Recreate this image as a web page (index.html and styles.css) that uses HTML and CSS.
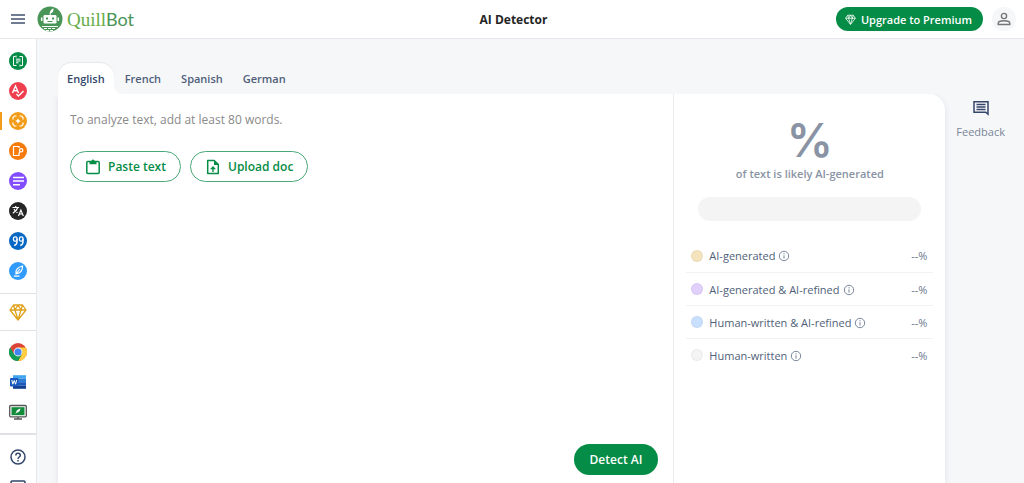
FILE: index.html
```html
<!DOCTYPE html>
<html lang="en">
<head>
<meta charset="utf-8">
<meta name="viewport" content="width=device-width, initial-scale=1">
<title>AI Detector</title>
<link rel="stylesheet" href="styles.css">
</head>
<body>
<svg class="defs" aria-hidden="true">
  <symbol id="gem" viewBox="0 0 18 18"><path d="M4.500 2h9L17 7l-8 10L1 7zM1 7h16M4.500 2 6 7l3 10 3-10 1.500-5M6 7l3-5 3 5" fill="none" stroke="currentColor" stroke-width="1.300" stroke-linejoin="round"/></symbol>
  <symbol id="info" viewBox="0 0 12 12"><circle cx="6" cy="6" r="4.700" fill="none" stroke="currentColor"/><path d="M6 5.300v3.400M6 3.200v1.200" stroke="currentColor"/></symbol>
</svg>
<header class="header">
  <div class="brand">
    <button class="plain" aria-label="Menu"><svg width="14" height="10" viewBox="0 0 14 10"><path d="M0 1h14M0 5h14M0 9h14" stroke="#42526e" stroke-width="1.500"/></svg></button>
    <a class="logo" href="#" aria-label="QuillBot">
      <svg width="26" height="26" viewBox="0 0 26 26">
        <circle cx="13" cy="13" r="12.500" fill="#499557"/>
        <path d="M13 9.500C12 6 14 3 16.500 2.500c.3 2.500-.8 4.500-2.800 5V9.500" fill="#fff"/>
        <rect x="6.500" y="9" width="13" height="8.500" rx="1.200" fill="#fff"/>
        <path d="M4.700 11.500v3.500M21.300 11.500v3.500" stroke="#fff" stroke-width="1.500"/>
        <rect x="9" y="11.500" width="2" height="2" fill="#499557"/><rect x="15" y="11.500" width="2" height="2" fill="#499557"/>
        <path d="M10.500 15.500h5" stroke="#499557"/>
        <path d="M5 20.500h16" stroke="#fff"/>
        <path d="M7 22.500h12M9 24.500h8" stroke="#fff" stroke-width="1.200" stroke-dasharray="3 1"/>
      </svg>
      <span class="wordmark"><span class="quill">Quill</span><span class="bot">Bot</span></span>
    </a>
  </div>
  <h1 class="title">AI Detector</h1>
  <div class="account">
    <button class="premium"><svg width="11" height="11"><use href="#gem"/></svg>Upgrade to Premium</button>
    <button class="avatar" aria-label="Account"><svg width="14" height="14" viewBox="0 0 14 14" fill="none" stroke="#757575" stroke-width="1.400"><circle cx="7" cy="4" r="2.600"/><path d="M1.200 12.500v-1.300c0-1.600 3-2.500 5.800-2.500s5.800.9 5.800 2.500v1.300z"/></svg></button>
  </div>
</header>
<div class="body">
  <nav class="sidebar" aria-label="Tools">
    <div class="group">
      <a class="tool" href="#" aria-label="Paraphraser"><svg width="18" height="18" viewBox="0 0 18 18"><circle cx="9" cy="9" r="9" fill="#058c46"/><path d="M6.500 4.500h-2v9h3M11.500 13.500h2v-9h-3M7 3.500v2M11 12.500v2M7 7.200h4.500M7 9h4.500M7 10.800h2.500" fill="none" stroke="#fff"/></svg></a>
      <a class="tool" href="#" aria-label="Grammar Checker"><svg width="18" height="18" viewBox="0 0 18 18"><circle cx="9" cy="9" r="9" fill="#ef3f4f"/><path d="m3.500 11 3-7 3 7M4.500 8.800h4M7.500 12l2 2 5-5" fill="none" stroke="#fff" stroke-width="1.400"/></svg></a>
      <a class="tool active" href="#" aria-label="AI Detector"><svg width="18" height="18" viewBox="0 0 18 18"><circle cx="9" cy="9" r="9" fill="#f39c19"/><path d="M4 7.500V5.500L5.500 4h2M10.500 4h2L14 5.500v2M14 10.500v2L12.500 14h-2M7.500 14h-2L4 12.500v-2" fill="none" stroke="#fff" stroke-width="1.200"/><path d="M9 6.200 9.900 8.100 11.800 9l-1.900.9L9 11.800l-.9-1.900L6.200 9l1.900-.9z" fill="#fff"/></svg></a>
      <a class="tool" href="#" aria-label="AI Humanizer"><svg width="18" height="18" viewBox="0 0 18 18"><circle cx="9" cy="9" r="9" fill="#f77b0b"/><path d="M10 6V4.500H4.500v9H10V11.500l1.200-2" fill="none" stroke="#fff" stroke-width="1.200"/><circle cx="12.200" cy="8.300" r="1.700" fill="none" stroke="#fff" stroke-width="1.200"/></svg></a>
      <a class="tool" href="#" aria-label="Summarizer"><svg width="18" height="18" viewBox="0 0 18 18"><circle cx="9" cy="9" r="9" fill="#824dff"/><path d="M4 5.500h11M4 9h11M4 12.700h7" stroke="#fff" stroke-width="1.500"/></svg></a>
      <a class="tool" href="#" aria-label="Translator"><svg width="18" height="18" viewBox="0 0 18 18"><circle cx="9" cy="9" r="9" fill="#252525"/><path d="M3.500 5.500h6.500M6.700 4v1.500M8.800 5.500C8 8 6 10 3.800 11.200M5 7c.8 1.700 2 2.800 3.500 3.800M9.500 14l2.400-6 2.400 6M10.300 12h3.200" fill="none" stroke="#fff" stroke-width="1.200"/></svg></a>
      <a class="tool" href="#" aria-label="Citation Generator"><svg width="18" height="18" viewBox="0 0 18 18"><circle cx="9" cy="9" r="9" fill="#0868c4"/><path d="M8 6.800v3C8 12 7 13 5.200 13.500M14 6.800v3c0 2.200-1 3.200-2.800 3.700" fill="none" stroke="#fff" stroke-width="1.400"/><rect x="4.500" y="4.800" width="3.500" height="4.400" rx="1.500" fill="none" stroke="#fff" stroke-width="1.300"/><rect x="10.500" y="4.800" width="3.500" height="4.400" rx="1.500" fill="none" stroke="#fff" stroke-width="1.300"/></svg></a>
      <a class="tool" href="#" aria-label="QuillBot Flow"><svg width="18" height="18" viewBox="0 0 18 18"><circle cx="9" cy="9" r="9" fill="#309bfa"/><path d="M7 12c-1-4 2-7 6.500-8 .2 4-1.500 7-6.500 8zm0 0 4-5M4.800 14.200h5.700" fill="none" stroke="#fff" stroke-width="1.200"/></svg></a>
    </div>
    <div class="group">
      <a class="tool gold" href="#" aria-label="Premium"><svg width="18" height="18"><use href="#gem"/></svg></a>
    </div>
    <div class="group apps">
      <a class="tool" href="#" aria-label="QuillBot for Chrome"><svg width="18" height="18" viewBox="0 0 18 18"><circle cx="9" cy="9" r="9" fill="#db4437"/><path d="M9 4.500h7.800A9 9 0 0 1 9 18l3.900-6.800z" fill="#ffcd40"/><path d="M12.900 11.200 9 18A9 9 0 0 1 1.200 4.500l3.900 6.700z" fill="#0f9d58"/><circle cx="9" cy="9" r="4.400" fill="#f5f5f5"/><circle cx="9" cy="9" r="3.500" fill="#4285f4"/></svg></a>
      <a class="tool" href="#" aria-label="QuillBot for Word"><svg width="18" height="18" viewBox="0 0 18 18"><path d="M4 2.200h13v3.500H4z" fill="#41a5ee"/><path d="M4 5.700h13v3.500H4z" fill="#2b7cd3"/><path d="M4 9.200h13v3.300H4z" fill="#185abd"/><path d="M4 12.500h13v3.300H4z" fill="#103f91"/><rect x="1" y="5" width="8.500" height="8.500" rx=".8" fill="#185abd"/><path d="m2.800 7 1 4.200L5.200 7.500l1.400 3.700 1-4.200" fill="none" stroke="#fff"/></svg></a>
      <a class="tool" href="#" aria-label="QuillBot for desktop"><svg width="18" height="18" viewBox="0 0 18 18"><rect x=".7" y="2.500" width="16.600" height="11.300" rx="1" fill="#fff" stroke="#555" stroke-width="1.300"/><rect x="2.500" y="4.200" width="13" height="8" fill="#128b3a"/><path d="M6.500 11c.5-3 2-5 5-5.500-.2 2.200-1.500 4-4 4.200z" fill="#fff"/><path d="M9 14v2M5 16h8" stroke="#555" stroke-width="1.400"/></svg></a>
    </div>
    <div class="group help">
      <a class="tool" href="#" aria-label="Help"><svg width="16" height="16" viewBox="0 0 16 16" fill="none" stroke="#34466b" stroke-width="1.500"><circle cx="8" cy="8" r="7"/><path d="M5.800 6.500c0-3 4.500-2.800 4.500-.2C10.300 8 8 8 8 10M8 11v1.500"/></svg></a>
      <a class="tool" href="#" aria-label="Contact"><svg width="16" height="14" viewBox="0 0 16 14" fill="none" stroke="#34466b" stroke-width="1.500"><rect x="1" y="1" width="14" height="12" rx="1"/><path d="m1 3 7 5 7-5"/></svg></a>
    </div>
  </nav>
  <main class="main">
    <div class="workspace">
      <div class="tabs" role="tablist">
        <button class="tab selected" role="tab" aria-selected="true">English</button>
        <button class="tab" role="tab" aria-selected="false">French</button>
        <button class="tab" role="tab" aria-selected="false">Spanish</button>
        <button class="tab" role="tab" aria-selected="false">German</button>
      </div>
      <div class="card">
        <section class="editor">
          <textarea class="input" rows="1" aria-label="Text to analyze" placeholder="To analyze text, add at least 80 words."></textarea>
          <div class="actions">
            <button class="outline"><svg width="16" height="16" viewBox="0 0 16 16"><rect x="1.800" y="2.500" width="12.400" height="12" rx="1" fill="none" stroke="currentColor" stroke-width="1.500"/><path d="M4.500 2h2a1.500 1.500 0 0 1 3 0h2v3.300h-7z" fill="currentColor"/></svg>Paste text</button>
            <button class="outline"><svg width="16" height="16" viewBox="0 0 16 16"><path d="M2.700 1.500h6.500L13.300 5.500v9H2.700z" fill="none" stroke="currentColor" stroke-width="1.500" stroke-linejoin="round"/><path d="M9 1v5h5zM8 7l3 3.300H8.700V13H7.300v-2.700H5z" fill="currentColor"/></svg>Upload doc</button>
          </div>
          <button class="detect">Detect AI</button>
        </section>
        <section class="results">
          <div class="score">%</div>
          <p class="caption">of text is likely AI-generated</p>
          <div class="meter"></div>
          <ul class="legend">
            <li class="row"><span class="dot ai"></span>AI-generated<svg width="12" height="12"><use href="#info"/></svg><span class="value">--%</span></li>
            <li class="row"><span class="dot ai-refined"></span>AI-generated &amp; AI-refined<svg width="12" height="12"><use href="#info"/></svg><span class="value">--%</span></li>
            <li class="row"><span class="dot human-refined"></span>Human-written &amp; AI-refined<svg width="12" height="12"><use href="#info"/></svg><span class="value">--%</span></li>
            <li class="row"><span class="dot human"></span>Human-written<svg width="12" height="12"><use href="#info"/></svg><span class="value">--%</span></li>
          </ul>
        </section>
      </div>
    </div>
    <button class="feedback"><svg width="16" height="16" viewBox="0 0 16 16"><path d="M1 1.700h14v12.500l-2.300-2H1z" fill="none" stroke="#34466b" stroke-width="1.500"/><path d="M3.500 4.500h9M3.500 7h9M3.500 9.500h9" stroke="#34466b" stroke-width="1.300"/></svg>Feedback</button>
  </main>
</div>
</body>
</html>
```
FILE: styles.css
```css
* { box-sizing: border-box; }
body {
  margin: 0;
  height: 100vh;
  overflow: hidden;
  display: flex;
  flex-direction: column;
  background: #f6f7f9;
  color: #505f79;
  font-family: "Open Sans", sans-serif;
  font-size: 11px;
}
button { font: inherit; color: inherit; border: 0; padding: 0; background: none; cursor: pointer; }
svg { flex: none; display: block; }
.defs { position: absolute; width: 0; height: 0; }

.header {
  flex: none;
  display: grid;
  grid-template-columns: 1fr auto 1fr;
  align-items: center;
  height: 39px;
  padding: 0 8px 0 11px;
  background: #fff;
  border-bottom: 1px solid #e6e8ec;
}
.brand, .account, .logo { display: flex; align-items: center; }
.brand { gap: 12px; }
.logo { gap: 4px; text-decoration: none; }
.wordmark { display: flex; align-items: baseline; line-height: 24px; }
.quill { font-family: "Liberation Serif", serif; font-size: 19px; color: #66ad49; }
.bot { font-family: Lato, sans-serif; font-size: 18px; color: #499557; }
.title { margin: 0; font-size: 12px; font-weight: 700; color: #252525; }
.account { justify-content: flex-end; gap: 9px; }
.premium {
  display: flex;
  align-items: center;
  gap: 5px;
  height: 24px;
  padding: 0 11px 0 9px;
  border-radius: 12px;
  background: #058c46;
  color: #fff;
  font-weight: 600;
}
.avatar { display: grid; place-items: center; width: 24px; height: 24px; border-radius: 50%; background: #f6f7f9; }

.body { flex: 1; min-height: 0; display: flex; }
.sidebar { flex: none; width: 37px; padding-top: 7px; background: #fff; border-right: 1px solid #e6e8ec; overflow: hidden; }
.group { padding-bottom: 7px; }
.group + .group { padding: 3px 0; border-top: 1px solid #dfe1e5; }
.group + .apps { padding: 6px 0; }
.group + .help { padding: 7px 0; border-top: 2px solid #dfe1e5; }
.tool { display: flex; align-items: center; justify-content: center; height: 30px; }
.active { background: linear-gradient(#f39c19, #f39c19) left center / 2px 18px no-repeat; }
.gold { color: #dfa21c; }

.main { flex: 1; min-width: 0; display: flex; gap: 11px; padding: 24px 19px 0 21px; }
.workspace { flex: 1; min-width: 0; display: flex; flex-direction: column; }
.tabs { display: flex; gap: 2px; height: 31px; }
.tab { position: relative; padding: 0 9px; font-weight: 600; color: #505f79; }
.selected { background: #fff; color: #34466b; border-radius: 14px 14px 0 0; box-shadow: 0 -1px 1px #e6e8ec; }
.selected::after {
  content: "";
  position: absolute;
  left: 100%;
  bottom: 0;
  width: 8px;
  height: 8px;
  background: radial-gradient(circle at 100% 0, #f6f7f9 7px, #fff 8px);
}
.card { flex: 1; min-height: 0; display: flex; background: #fff; border-radius: 0 16px 0 0; box-shadow: 0 2px 6px #dfe1e5; clip-path: inset(0 -8px 0 -8px); }
.editor { flex: 1; min-width: 0; display: flex; flex-direction: column; padding: 16px 15px 8px 12px; }
.input {
  width: 100%;
  height: 20px;
  padding: 0;
  border: 0;
  outline: 0;
  resize: none;
  overflow: hidden;
  background: none;
  font: 12px/20px "Open Sans", sans-serif;
}
.input::placeholder { color: #8a8a8a; opacity: 1; }
.actions { display: flex; gap: 9px; margin-top: 21px; }
.outline {
  display: flex;
  align-items: center;
  gap: 7px;
  height: 31px;
  padding: 0 14px;
  border: 1px solid #4aa878;
  border-radius: 16px;
  color: #058c46;
  font-size: 12px;
  font-weight: 600;
}
.detect { align-self: flex-end; margin-top: auto; height: 31px; padding: 0 16px; border-radius: 16px; background: #058c46; color: #fff; font-size: 12px; font-weight: 600; }
.results { flex: none; width: 272px; padding: 20px 12px 0; border-left: 1px solid #e9ebee; }
.score { text-align: center; font: 600 46px/52px Inter, sans-serif; color: #8993a4; }
.caption { margin: 0; text-align: center; line-height: 16px; font-weight: 600; color: #8993a4; }
.meter { height: 24px; margin: 15px 12px 18px; border-radius: 12px; background: #f4f4f4; }
.legend { list-style: none; margin: 0; padding: 0; }
.row { display: flex; align-items: center; height: 33px; padding: 0 6px 0 5px; }
.row + .row { border-top: 1px solid #f1f2f4; }
.dot { width: 12px; height: 12px; margin-right: 6px; border-radius: 50%; border: 1px solid #0000000a; }
.row svg { margin: 1px 0 0 3px; color: #7a869a; }
.value { margin-left: auto; color: #6b778c; }
.ai { background: #f4e4bd; }
.ai-refined { background: #e1cffc; }
.human-refined { background: #c8dffd; }
.human { background: #f4f4f4; }
.feedback { flex: none; align-self: flex-start; display: flex; flex-direction: column; align-items: center; gap: 8px; margin-top: 37px; line-height: 15px; color: #7a869a; }
```
